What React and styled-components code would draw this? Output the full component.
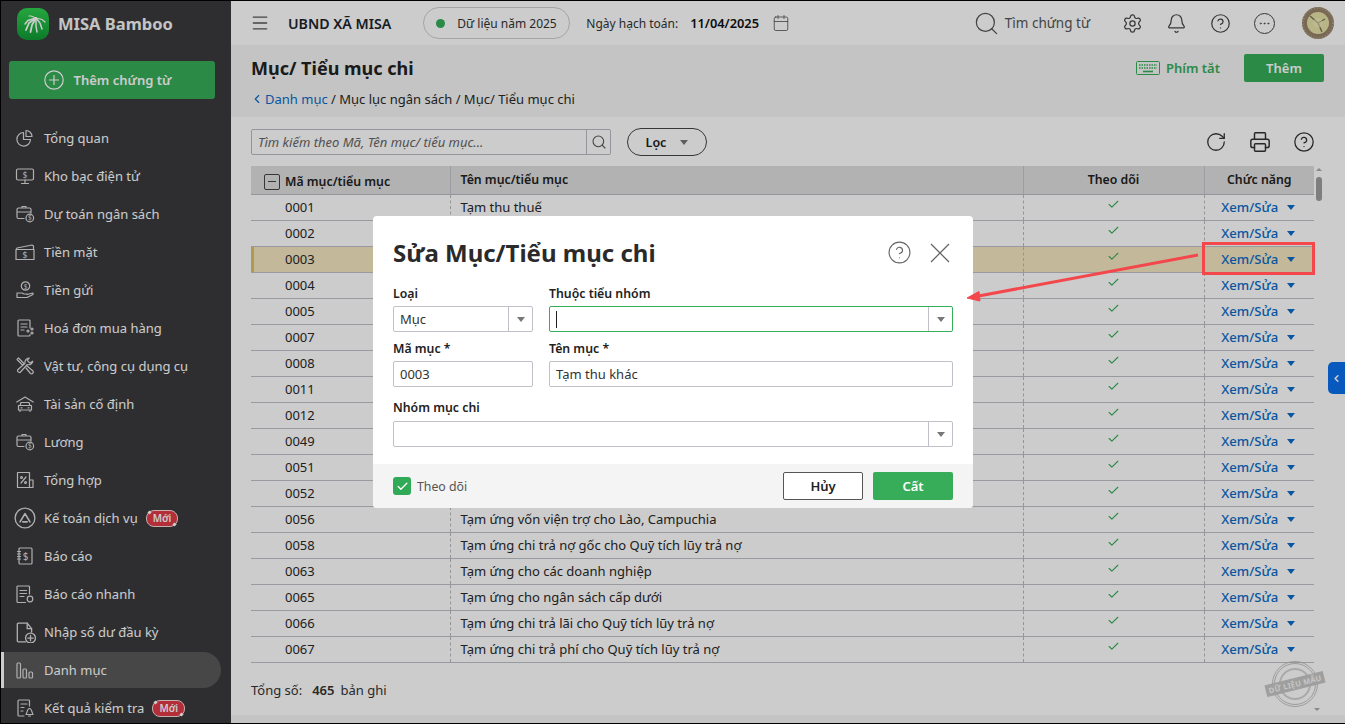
import React from 'react';
import styled, { createGlobalStyle } from 'styled-components';
import { Search, Settings, Bell, CircleHelp, Ellipsis, RotateCw, Printer, ChevronLeft, Calendar, Check, Menu } from 'lucide-react';

const Global = createGlobalStyle`
  * { box-sizing: border-box; }
  html, body { margin: 0; padding: 0; height: 100%; overflow: hidden; }
  body { font-family: "Noto Sans", "Liberation Sans", sans-serif; font-size: 13px; color: #262626; background: #000; }
`;

const Page = styled.div`
  position: relative; width: 1345px; height: 724px; padding: 1px 0 1px 1px; display: flex; background: #000; overflow: hidden;
`;
const Sidebar = styled.aside`
  width: 230px; flex: none; height: 100%; background: #3a3a3d; display: flex; flex-direction: column; overflow: hidden;
`;
const Brand = styled.div`
  height: 48px; padding: 0 0 3px 16px; display: flex; align-items: center; gap: 9px; flex: none;
  color: #f6f6f6; font-size: 16.5px; font-weight: 700;
`;
const AddButton = styled.button`
  margin: 12px 16px 0 8px; height: 38px; flex: none; border: 0; border-radius: 3px; background: #37ad59; color: #fff;
  font: 600 13px "Noto Sans", sans-serif; display: flex; align-items: center; justify-content: center; gap: 10px; padding: 0 9px 0 0;
`;
const Nav = styled.nav`
  margin-top: 21px; display: flex; flex-direction: column; gap: 2px;
`;
const NavItem = styled.div`
  height: 36px; flex: none; width: 220px; display: flex; align-items: center; gap: 9px; padding-left: ${p => p.$active ? '10px' : '13px'};
  color: #fff; font-size: 13px; white-space: nowrap;
  ${p => p.$active && 'background:#59595b;border-left:3px solid #fff;border-radius:0 18px 18px 0;'}
  svg { flex: none; }
`;
const IconSlot = styled.span`
  width: 21px; height: 22px; flex: none; display: flex; align-items: center; justify-content: center;
`;
const NavLabel = styled.span`
  margin-right: -1px;
`;
const NewBadge = styled.span`
  position: relative; height: 17px; padding: 0 6px; border-radius: 8px; background: #e03a46; border: 1.5px solid #f8dada;
  color: #fff; font-size: 10px; font-weight: 600; line-height: 14px;
  &::before, &::after { content: ""; position: absolute; width: 3px; height: 3px; background: #fff; transform: rotate(45deg); }
  &::before { left: 1px; top: 0; }
  &::after { right: 1px; bottom: 0; }
`;

const Main = styled.main`
  flex: 1; min-width: 0; height: 100%; display: flex; flex-direction: column; background: #fff;
`;
const Topbar = styled.header`
  height: 44px; flex: none; display: flex; align-items: center; padding: 0 11px 0 19px;
`;
const Org = styled.div`
  margin-left: 18px; font-size: 14.2px; font-weight: 600; color: #20242c;
`;
const YearPill = styled.div`
  margin-left: 32px; width: 147px; height: 32px; border: 1px solid #cfcfcf; border-radius: 16px; display: flex; align-items: center; gap: 12px; padding-left: 12px; font-size: 12px; color: #333;
`;
const Dot = styled.i`
  width: 9px; height: 9px; border-radius: 50%; background: #37ad59;
`;
const DateLabel = styled.div`
  margin-left: 16px; font-size: 12px; color: #333;
`;
const DateValue = styled.div`
  margin: 0 13px 0 12px; font-size: 12.8px; font-weight: 600; color: #111;
`;
const Spacer = styled.div` flex: 1; `;
const GlobalSearch = styled.div`
  display: flex; align-items: center; gap: 5px; color: #555; font-size: 13.5px; margin-right: 32px;
`;
const TopIcons = styled.div`
  display: flex; align-items: center; gap: 23px; margin-right: 27px; color: #444;
`;
const AvatarArt = styled.svg` flex: none; `;
const SubHeader = styled.section`
  height: 72px; flex: none; background: #f5f5f5; padding: 0 21px 0 20px; display: flex; justify-content: space-between;
`;
const TitleBlock = styled.div` padding-top: 10px; `;
const PageTitle = styled.h1`
  margin: 0; font-size: 18px; font-weight: 700; line-height: 27px; color: #222;
`;
const Crumbs = styled.div`
  margin-top: 8px; display: flex; align-items: center; font-size: 13px; line-height: 18px; color: #2a2a2a; white-space: pre;
  a { color: #0b6cc8; }
  svg { margin-left: -1px; margin-right: 1px; color: #0b6cc8; }
`;
const HeadActions = styled.div`
  padding-top: 9px; display: flex; align-items: flex-start; gap: 24px;
`;
const Shortcut = styled.div`
  height: 28px; display: flex; align-items: center; gap: 6px; color: #37ad59; font-weight: 600; font-size: 13px;
`;
const GreenButton = styled.button`
  width: 80px; height: 28px; border: 0; border-radius: 2px; background: #37ad59; color: #fff; font: 600 13px "Noto Sans", sans-serif; padding: 0;
`;
const Content = styled.section`
  flex: 1; min-height: 0; padding: 10px 0 0 20px; position: relative; display: flex; flex-direction: column;
`;
const Toolbar = styled.div`
  height: 30px; display: flex; align-items: center; padding-right: 30px;
`;
const SearchBox = styled.div`
  width: 360px; height: 26px; border: 1px solid #bbbcc4; border-radius: 2px; display: flex; align-items: center;
  color: #666; font-style: italic; font-size: 13px; padding-left: 6px;
  span { flex: 1; }
  div { width: 24px; height: 100%; border-left: 1px solid #bbbcc4; display: flex; align-items: center; justify-content: center; color: #555; }
`;
const FilterBtn = styled.div`
  margin-left: 16px; width: 80px; height: 28px; border: 1px solid #444; border-radius: 14px; display: flex; align-items: center; justify-content: center; gap: 14px;
  font-weight: 600; font-size: 12.5px; color: #222;
`;
const Caret = styled.i`
  display: inline-block; width: 0; height: 0; border-left: 4px solid transparent; border-right: 4px solid transparent;
  border-top: 5px solid ${p => p.$c || '#666'};
`;
const ToolIcons = styled.div`
  margin-left: auto; display: flex; align-items: center; gap: 22px; color: #333;
`;
const TableWrap = styled.div`
  margin-top: 9px; display: flex; flex: none;
`;
const Table = styled.table`
  width: 1063px; border-collapse: collapse; table-layout: fixed; font-size: 13px;
`;
const Th = styled.th`
  height: 28px; background: #dfdfdf; border-bottom: 1px solid #bbbcc4; border-right: ${p => p.$last ? 0 : '1px solid #c4c5cc'};
  font-weight: 600; font-size: 12.3px; color: #222; text-align: ${p => p.$center ? 'center' : 'left'}; padding: ${p => p.$pad || '0 10px'}; white-space: nowrap;
`;
const HeadCheck = styled.span`
  display: inline-flex; align-items: center; gap: 5px;
  i { width: 16px; height: 16px; border: 1px solid #444; border-radius: 2px; display: inline-flex; align-items: center; justify-content: center; }
  i::after { content: ""; width: 8px; height: 1px; background: #444; }
`;
const Td = styled.td`
  height: 26px; padding: ${p => p.$pad || '0 10px'}; border-bottom: 1px solid #c0c1c8; color: #282828; white-space: nowrap;
  ${p => p.$hl && 'background:#f5e6c2;'}
  ${p => p.$dash && 'border-right: 1px dashed #bbb;'}
  ${p => p.$center && 'text-align:center;'}
  ${p => p.$tab && 'box-shadow: inset 3px 0 0 #dfc15f;'}
`;
const CheckMark = styled(Check)`
  vertical-align: 0;
  display: inline-block;
  margin-bottom: 2px;
`;
const ActionCell = styled.span`
  display: inline-flex; align-items: center; gap: 9px; color: #0b6cc8; font-weight: 500; font-size: 13.1px; line-height: 14px; margin-bottom: 2px;
`;
const ScrollRail = styled.div`
  width: 11px; position: relative; flex: none;
  i { position: absolute; top: 11px; left: 2px; width: 6px; height: 24px; background: #9e9e9e; border-radius: 3px; }
  b { position: absolute; top: 2px; left: 2px; border: 3px solid transparent; border-bottom-color: #aaa; border-top: 0; }
`;
const Total = styled.div`
  position: absolute; left: 20px; top: 564px; font-size: 13px; color: #333; display: flex; gap: 6px;
  b { font-weight: 600; margin-left: 4px; }
`;
const BottomStrip = styled.div`
  position: absolute; left: 0; right: 0; bottom: 0; height: 8px; background: #f5f5f5;
`;
const ScrollDown = styled.b`
  position: absolute; right: 25px; bottom: 12px; border: 3px solid transparent; border-top-color: #aaa; border-bottom: 0;
`;
const Stamp = styled.div`
  position: absolute; left: 1041px; top: 544px; width: 46px; height: 46px; display: flex; align-items: center; justify-content: center; opacity: .78;
  &::before { content: ""; position: absolute; inset: 0; border-radius: 50%; border: 3px double #b4b4b4; }
  &::after { content: ""; position: absolute; inset: 7px; border-radius: 50%; border: 2px solid #c8c8c8; }
  span { position: relative; z-index: 1; transform: rotate(-14deg); background: #b8b8b8; color: #f6f6f6; font-size: 7.5px; font-weight: 700; padding: 1px 3px; white-space: nowrap; letter-spacing: .3px; }
`;
const SideTab = styled.div`
  position: absolute; right: 0; top: 362px; width: 17px; height: 32px; background: #0a70ee; border-radius: 5px 0 0 5px; color: #fff; display: flex; align-items: center; justify-content: center; z-index: 1;
`;
const Overlay = styled.div`
  position: absolute; inset: 1px 0 1px 1px; background: rgba(0,0,0,.2); z-index: 5;
`;
const Modal = styled.div`
  position: absolute; left: 373px; top: 216px; width: 600px; height: 292px; background: #fff; border-radius: 4px; z-index: 6; display: flex; flex-direction: column; overflow: hidden;
`;
const ModalBody = styled.div`
  flex: 1; padding: 0 20px; display: flex; flex-direction: column;
`;
const ModalHead = styled.div`
  height: 70px; flex: none; display: flex; align-items: center; justify-content: space-between; padding: 3px 3px 0 0;
`;
const ModalTitle = styled.h2`
  margin: 0; font-size: 24px; line-height: 32px; font-weight: 700; color: #2a2a2a;
`;
const ModalTools = styled.div`
  display: flex; align-items: center; gap: 18px; color: #666;
`;
const FormRow = styled.div`
  display: grid; grid-template-columns: 140px 1fr; column-gap: 16px; height: ${p => p.$h}px; flex: none;
`;
const Field = styled.div`
  display: flex; flex-direction: column; min-width: 0;
`;
const Label = styled.label`
  height: ${p => p.$h || 20}px; font-size: 12.3px; font-weight: 600; line-height: 16px; color: #222;
`;
const Control = styled.div`
  height: 26px; border: 1px solid ${p => p.$focus ? '#37ad59' : '#c0c1c8'}; border-radius: 2px; display: flex; align-items: center; font-size: 13px; color: #333; background: #fff;
`;
const ControlText = styled.span`
  flex: 1; padding-left: 6px; display: flex; align-items: center; white-space: nowrap;
`;
const Cursor = styled.i`
  width: 1px; height: 17px; background: #222;
`;
const ControlArrow = styled.span`
  width: 24px; height: 100%; border-left: 1px solid #c0c1c8; display: flex; align-items: center; justify-content: center; flex: none;
`;
const ModalFoot = styled.footer`
  height: 44px; flex: none; background: #f4f4f4; padding: 0 20px; display: flex; align-items: center; gap: 10px;
`;
const CheckBox = styled.span`
  width: 18px; height: 18px; background: #31aa57; border-radius: 3px; display: flex; align-items: center; justify-content: center; color: #fff; margin-right: -4px;
`;
const FootLabel = styled.span`
  font-size: 12.3px; color: #555; flex: 1;
`;
const CancelBtn = styled.button`
  width: 80px; height: 28px; border: 1px solid #555; border-radius: 2px; background: #fff; color: #222; font: 600 13px "Noto Sans", sans-serif; padding: 0;
`;
const Annotation = styled.svg`
  position: absolute; left: 0; top: 0; z-index: 7; pointer-events: none;
`;
const Logo = styled.svg` flex: none; `;

const Ic = ({ children, s = 20 }) => (
  <svg width={s} height={s} viewBox="0 0 20 20" fill="none" stroke="#dcdcdc" strokeWidth="1.2" strokeLinecap="round" strokeLinejoin="round">{children}</svg>
);
const dollar = (x, y, fs = 8) => <text x={x} y={y} fontSize={fs} fill="#dcdcdc" stroke="none" fontFamily="Noto Sans" textAnchor="middle">$</text>;
const budgetIcon = <Ic><path d="M9 14.5H3.5A1.5 1.5 0 0 1 2 13V5.5A1.5 1.5 0 0 1 3.5 4h11A1.5 1.5 0 0 1 16 5.5V9M2 8h14M7 4V2.5h4V4" /><circle cx="14.8" cy="14" r="3.8" />{dollar(14.8, 16.4, 6.5)}</Ic>;

const icons = {
  pie: <Ic><path d="M8.5 4.5a6.8 6.8 0 1 0 7 7h-7z" /><path d="M11 2.5a6 6 0 0 1 6 6h-6z" /></Ic>,
  monitor: <Ic><rect x="1.5" y="3" width="17" height="11" rx="1.5" /><path d="M10 14v3M6.5 17.5h7" />{dollar(10, 11.5)}</Ic>,
  budget: budgetIcon,
  cash: <Ic><path d="M1 7.5h18v10H1zM1 7.5l1-1.5L17 3l1.5 1v3.5" />{dollar(10, 15.5, 8.5)}</Ic>,
  deposit: <Ic><circle cx="10.5" cy="6" r="4.2" />{dollar(10.5, 8.5, 6.5)}<path d="M2 13h5l2 1h3.5M2 13v4.5h10l6-3v-1.5l-6 1.5" /></Ic>,
  invoice: <Ic><path d="M15 10V3a1 1 0 0 0-1-1H4a1 1 0 0 0-1 1v14a1 1 0 0 0 1 1h10a1 1 0 0 0 1-1v-.5" /><path d="M6 6h6M6 9h6M6 12h3" /><circle cx="13" cy="13" r="1" /><circle cx="17" cy="11" r="1" /><circle cx="17" cy="15" r="1" /></Ic>,
  tools: <Ic><path d="M2 3.5L3.5 2 9 7.5 7.5 9zM11 12l4.5 5.5a1.8 1.8 0 0 0 2.5-2.5L12 10" /><path d="M17.8 5.2a4.2 4.2 0 0 1-5.5 3.3L5 16.5A2.2 2.2 0 0 1 2.5 14L10 7.2A4.2 4.2 0 0 1 14.2 2l-2 2.4 2.6 2.6z" /></Ic>,
  car: <Ic><path d="M1.8 8L10 3l8.2 5" /><path d="M5 11.5L6 8.5h8l1 3M3.5 11.5h13v4.5h-13zM5 16v1.5M15 16v1.5M6 13.8h1M13 13.8h1" /></Ic>,
  salary: budgetIcon,
  sum: <Ic><path d="M14.5 17.5H2.5v-15h12zM14.5 10h3.5v7.5h-3.5" /><path d="M6 13l5-6" /><circle cx="6.5" cy="7.5" r=".9" /><circle cx="10.5" cy="12.5" r=".9" /></Ic>,
  logoA: <Ic s={22}><circle cx="10" cy="10" r="9" /><path d="M5.5 13.5L10 6l4.5 7.5M8 13.5h4" strokeWidth="1.5" /></Ic>,
  report: <Ic><rect x="4" y="2" width="13" height="16" rx="1" /><path d="M2.5 5.5h3M2.5 8h3M2.5 10.5h3M2.5 13h3" />{dollar(10.5, 13.5, 10)}</Ic>,
  quick: <Ic><path d="M14.5 10V3a1 1 0 0 0-1-1H3a1 1 0 0 0-1 1v14.5a1 1 0 0 0 1 1h7.5" /><path d="M5 6.5h6.5M5 9.5h6.5M5 12.5h4" /><circle cx="15" cy="15" r="2.8" /></Ic>,
  import: <Ic s={22}><path d="M10.5 19H4a1 1 0 0 1-1-1V3a1 1 0 0 1 1-1h8l4 5v3" /><path d="M12 2v5h4" /><circle cx="15" cy="15.5" r="4.5" /><path d="M15 13v5M12.5 15.5h5" /></Ic>,
  catalog: <Ic><rect x="2" y="3" width="3.5" height="15" rx="1" /><rect x="8" y="9" width="3.5" height="9" rx="1" /><rect x="14" y="12" width="3.5" height="6" rx="1" /></Ic>,
  check: <Ic><path d="M14.5 8V3a1 1 0 0 0-1-1H4a1 1 0 0 0-1 1v14a1 1 0 0 0 1 1h5" /><path d="M6 6h6M6 9.5h3M6 13h2" /><path d="M11 16.5c1-1 1-6 3.5-6s2.5 5 3.5 6zM13.5 18h2" /></Ic>,
};

const navItems = [
  ['pie', 'Tổng quan'], ['monitor', 'Kho bạc điện tử'], ['budget', 'Dự toán ngân sách'], ['cash', 'Tiền mặt'], ['deposit', 'Tiền gửi'],
  ['invoice', 'Hoá đơn mua hàng'], ['tools', 'Vật tư, công cụ dụng cụ'], ['car', 'Tài sản cố định'], ['salary', 'Lương'], ['sum', 'Tổng hợp'],
  ['logoA', 'Kế toán dịch vụ', true], ['report', 'Báo cáo'], ['quick', 'Báo cáo nhanh'], ['import', 'Nhập số dư đầu kỳ'],
  ['catalog', 'Danh mục', false, true], ['check', 'Kết quả kiểm tra', true],
];

const rows = [
  ['0001', 'Tạm thu thuế'], ['0002', ''], ['0003', ''], ['0004', ''], ['0005', ''], ['0007', ''],
  ['0008', ''], ['0011', ''], ['0012', ''], ['0049', ''], ['0051', ''], ['0052', ''],
  ['0056', 'Tạm ứng vốn viện trợ cho Lào, Campuchia'], ['0058', 'Tạm ứng chi trả nợ gốc cho Quỹ tích lũy trả nợ'], ['0063', 'Tạm ứng cho các doanh nghiệp'],
  ['0065', 'Tạm ứng cho ngân sách cấp dưới'], ['0066', 'Tạm ứng chi trả lãi cho Quỹ tích lũy trả nợ'], ['0067', 'Tạm ứng chi trả phí cho Quỹ tích lũy trả nợ'],
];

export default function App() {
  return (
    <Page>
      <Global />
      <Sidebar>
        <Brand>
          <Logo width="32" height="32" viewBox="0 0 32 32">
            <defs><linearGradient id="lg" x1="0" y1="0" x2="0" y2="1"><stop offset="0" stopColor="#2fd04f" /><stop offset="1" stopColor="#0f9a35" /></linearGradient></defs>
            <rect width="32" height="32" rx="10" fill="url(#lg)" />
            <g fill="none" stroke="#fff" strokeLinecap="round">
              <path d="M19 10L11 12.5 8 16" strokeWidth="1.5" />
              <path d="M19 10L12 15 9 22" strokeWidth="1.8" />
              <path d="M19 10L15 17 13.5 24" strokeWidth="1.8" />
              <path d="M19 10L19 18 20 24" strokeWidth="1.5" />
              <path d="M19 10L23 15 25 21" strokeWidth="1.5" />
              <path d="M19 10L25 11.5 28 14" strokeWidth="1.2" />
              <path d="M19 10L14 8 12 8" strokeWidth="1.2" />
            </g>
          </Logo>
          MISA Bamboo
        </Brand>
        <AddButton><svg width="20" height="20" viewBox="0 0 20 20" fill="none" stroke="#fff" strokeWidth="1.2"><circle cx="10" cy="10" r="9.2" /><path d="M10 5v10M5 10h10" /></svg>Thêm chứng từ</AddButton>
        <Nav>
          {navItems.map(([ic, label, isNew, active]) => (
            <NavItem key={label} $active={active}><IconSlot>{icons[ic]}</IconSlot><NavLabel>{label}</NavLabel>{isNew && <NewBadge>Mới</NewBadge>}</NavItem>
          ))}
        </Nav>
      </Sidebar>
      <Main>
        <Topbar>
          <Menu size={20} color="#555" strokeWidth={1.6} />
          <Org>UBND XÃ MISA</Org>
          <YearPill><Dot />Dữ liệu năm 2025</YearPill>
          <DateLabel>Ngày hạch toán:</DateLabel>
          <DateValue>11/04/2025</DateValue>
          <Calendar size={18} color="#555" strokeWidth={1.1} />
          <Spacer />
          <GlobalSearch><Search size={27} strokeWidth={1.1} />Tìm chứng từ</GlobalSearch>
          <TopIcons>
            <Settings size={21} strokeWidth={1.4} />
            <Bell size={21} strokeWidth={1.4} />
            <CircleHelp size={21} strokeWidth={1.4} />
            <Ellipsis size={21} strokeWidth={1.4} style={{ border: '1.4px solid #444', borderRadius: '50%', padding: 3 }} />
          </TopIcons>
          <AvatarArt width="32" height="32" viewBox="0 0 32 32">
            <circle cx="16" cy="16" r="16" fill="#96836a" />
            <circle cx="16" cy="16" r="15" fill="none" stroke="#b5a98e" strokeDasharray="1 2" strokeWidth="2" />
            <circle cx="16" cy="16" r="11" fill="#e6e2a8" />
            <path d="M16 16L8 9M16 16L23 12M16 16L20 25" stroke="#7c7350" strokeWidth="1.4" />
            <circle cx="16" cy="16" r="5" fill="#f2eec0" opacity=".55" />
          </AvatarArt>
        </Topbar>
        <SubHeader>
          <TitleBlock>
            <PageTitle>Mục/ Tiểu mục chi</PageTitle>
            <Crumbs><ChevronLeft size={14} strokeWidth={2} /><a>Danh mục</a> / Mục lục ngân sách / Mục/ Tiểu mục chi</Crumbs>
          </TitleBlock>
          <HeadActions>
            <Shortcut>
              <svg width="24" height="14" viewBox="0 0 24 14" fill="none" stroke="#37ad59"><rect x=".5" y=".5" width="23" height="13" rx="1" /><path d="M3 4h18M3 7h18" strokeDasharray="1.5 1" strokeWidth="1.4" /><path d="M7 10.5h10" strokeWidth="1.6" /></svg>
              Phím tắt
            </Shortcut>
            <GreenButton>Thêm</GreenButton>
          </HeadActions>
        </SubHeader>
        <Content>
          <Toolbar>
            <SearchBox><span>Tìm kiếm theo Mã, Tên mục/ tiểu mục...</span><div><Search size={16} strokeWidth={1.6} /></div></SearchBox>
            <FilterBtn>Lọc <Caret $c="#777" /></FilterBtn>
            <ToolIcons>
              <RotateCw size={22} strokeWidth={1.4} />
              <Printer size={22} strokeWidth={1.6} />
              <CircleHelp size={22} strokeWidth={1.4} />
            </ToolIcons>
          </Toolbar>
          <TableWrap>
            <Table>
              <colgroup><col style={{ width: 199 }} /><col style={{ width: 573 }} /><col style={{ width: 181 }} /><col style={{ width: 110 }} /></colgroup>
              <thead>
                <tr>
                  <Th $pad="0 0 0 13px"><HeadCheck><i />Mã mục/tiểu mục</HeadCheck></Th>
                  <Th>Tên mục/tiểu mục</Th>
                  <Th $center>Theo dõi</Th>
                  <Th $center $last>Chức năng</Th>
                </tr>
              </thead>
              <tbody>
                {rows.map(([code, name]) => {
                  const hl = code === '0003';
                  return (
                    <tr key={code}>
                      <Td $hl={hl} $tab={hl} $dash $pad="0 0 0 34px">{code}</Td>
                      <Td $hl={hl} $dash>{name}</Td>
                      <Td $hl={hl} $dash $center><CheckMark size={13} color="#37ad59" strokeWidth={2} /></Td>
                      <Td $hl={hl} $center $pad="0 11px 0 9px"><ActionCell>Xem/Sửa <Caret $c="#0b6cc8" /></ActionCell></Td>
                    </tr>
                  );
                })}
              </tbody>
            </Table>
            <ScrollRail><b /><i /></ScrollRail>
          </TableWrap>
          <Total><span>Tổng số:</span><b>465</b><span>bản ghi</span></Total>
          <Stamp><span>DỮ LIỆU MẪU</span></Stamp>
          <ScrollDown />
          <BottomStrip />
        </Content>
      </Main>
      <SideTab><ChevronLeft size={11} strokeWidth={3.5} /></SideTab>
      <Overlay />
      <Modal>
        <ModalBody>
          <ModalHead>
            <ModalTitle>Sửa Mục/Tiểu mục chi</ModalTitle>
            <ModalTools>
              <CircleHelp size={25} strokeWidth={1.1} />
              <svg width="20" height="20" viewBox="0 0 20 20" stroke="currentColor" strokeWidth="1.3" fill="none"><path d="M1 1l18 18M19 1L1 19" /></svg>
            </ModalTools>
          </ModalHead>
          <FormRow $h={55}>
            <Field><Label>Loại</Label><Control><ControlText>Mục</ControlText><ControlArrow><Caret $c="#777" /></ControlArrow></Control></Field>
            <Field><Label>Thuộc tiểu nhóm</Label><Control $focus><ControlText><Cursor /></ControlText><ControlArrow><Caret $c="#777" /></ControlArrow></Control></Field>
          </FormRow>
          <FormRow $h={59}>
            <Field><Label>Mã mục *</Label><Control><ControlText>0003</ControlText></Control></Field>
            <Field><Label>Tên mục *</Label><Control><ControlText>Tạm thu khác</ControlText></Control></Field>
          </FormRow>
          <Field><Label $h={21}>Nhóm mục chi</Label><Control><ControlText /><ControlArrow><Caret $c="#777" /></ControlArrow></Control></Field>
        </ModalBody>
        <ModalFoot>
          <CheckBox><Check size={13} strokeWidth={2.4} /></CheckBox>
          <FootLabel>Theo dõi</FootLabel>
          <CancelBtn>Hủy</CancelBtn>
          <GreenButton>Cất</GreenButton>
        </ModalFoot>
      </Modal>
      <Annotation width="1345" height="724">
        <rect x="1203.5" y="243.5" width="110" height="30" fill="none" stroke="#f4474c" strokeWidth="3" />
        <path d="M1198 255L976 296.5" stroke="#f4474c" strokeWidth="3" />
        <path d="M967 298L979 291.5L980 301Z" fill="#f4474c" stroke="#f4474c" />
      </Annotation>
    </Page>
  );
}
